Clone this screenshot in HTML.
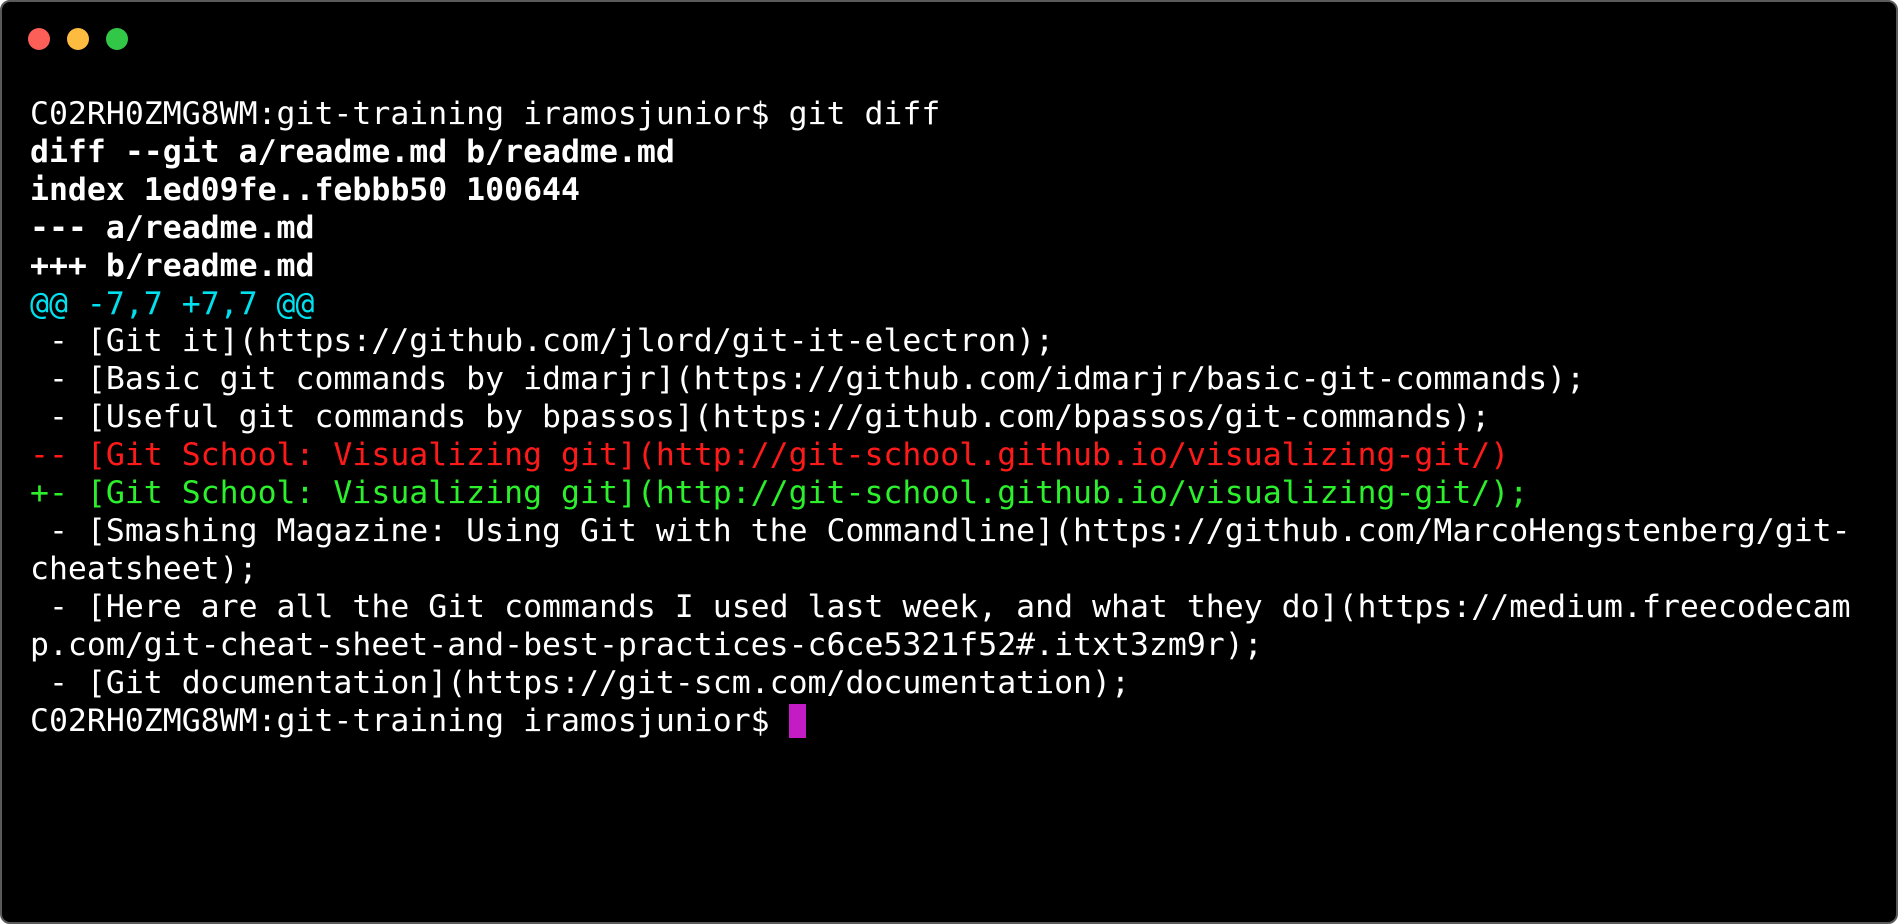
<!DOCTYPE html>
<html><head><meta charset="utf-8"><style>
html,body{margin:0;padding:0;background:#fff;width:1898px;height:924px;overflow:hidden}
.win{position:absolute;left:0;top:0;width:1894px;height:920px;background:#000;border:2px solid #5a5a5a;border-radius:10px}
.dot{position:absolute;top:26px;width:22px;height:22px;border-radius:50%}
pre{position:absolute;left:28px;top:94px;margin:0;font-family:"DejaVu Sans Mono","Liberation Mono",monospace;font-size:31.5px;line-height:37.9px;color:#fff;white-space:pre}
b{font-weight:bold}
.c{color:#00e0ee}.r{color:#ff1a1a}.g{color:#2cf02c}
.cur{display:inline-block;width:17px;height:34px;background:#c41cc4;vertical-align:-7px}
</style></head><body>
<div class="win">
<div class="dot" style="left:26px;background:#fc5f57"></div>
<div class="dot" style="left:65px;background:#fdbc40"></div>
<div class="dot" style="left:104px;background:#33c748"></div>
<pre>C02RH0ZMG8WM:git-training iramosjunior$ git diff
<b>diff --git a/readme.md b/readme.md</b>
<b>index 1ed09fe..febbb50 100644</b>
<b>--- a/readme.md</b>
<b>+++ b/readme.md</b>
<span class="c">@@ -7,7 +7,7 @@</span>
 - [Git it](https://github.com/jlord/git-it-electron);
 - [Basic git commands by idmarjr](https://github.com/idmarjr/basic-git-commands);
 - [Useful git commands by bpassos](https://github.com/bpassos/git-commands);
<span class="r">-- [Git School: Visualizing git](http://git-school.github.io/visualizing-git/)</span>
<span class="g">+- [Git School: Visualizing git](http://git-school.github.io/visualizing-git/);</span>
 - [Smashing Magazine: Using Git with the Commandline](https://github.com/MarcoHengstenberg/git-
cheatsheet);
 - [Here are all the Git commands I used last week, and what they do](https://medium.freecodecam
p.com/git-cheat-sheet-and-best-practices-c6ce5321f52#.itxt3zm9r);
 - [Git documentation](https://git-scm.com/documentation);
C02RH0ZMG8WM:git-training iramosjunior$ <span class="cur"></span></pre>
</div>
</body></html>
